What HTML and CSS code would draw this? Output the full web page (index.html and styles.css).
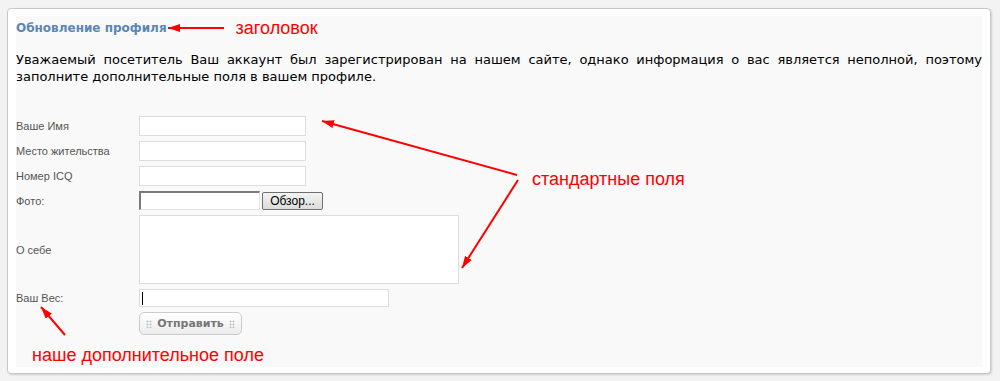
FILE: index.html
```html
<!DOCTYPE html>
<html lang="ru">
<head>
    <meta charset="UTF-8">
    <meta name="viewport" content="width=device-width, initial-scale=1.0">
    <title>Обновление профиля</title>
    <link rel="stylesheet" href="styles.css">
</head>
<body>
    <div id="page">
        <div id="card">
            <div id="panel">
                <div class="title-row">
                    <h2 class="title">Обновление профиля</h2>
                    <span class="note note-title">заголовок</span>
                </div>

                <p class="intro">Уважаемый посетитель Ваш аккаунт был зарегистрирован на нашем сайте, однако информация о вас является неполной, поэтому заполните дополнительные поля в вашем профиле.</p>

                <form id="profileForm">
                    <label for="name">Ваше Имя</label>
                    <input type="text" id="name" class="field">

                    <label for="city">Место жительства</label>
                    <input type="text" id="city" class="field">

                    <label for="icq">Номер ICQ</label>
                    <input type="text" id="icq" class="field">

                    <label for="photo">Фото:</label>
                    <div class="file">
                        <input type="text" id="photo" class="file-path">
                        <button type="button" class="browse">Обзор...</button>
                    </div>

                    <label for="about">О себе</label>
                    <textarea id="about" class="area"></textarea>

                    <label for="weight">Ваш Вес:</label>
                    <input type="text" id="weight" class="field field-wide">

                    <span></span>
                    <div>
                        <button type="submit" class="submit"><i class="grip"></i>Отправить<i class="grip"></i></button>
                    </div>
                </form>

                <p class="note note-extra">наше дополнительное поле</p>
            </div>
        </div>

        <!-- annotations drawn over the screenshot -->
        <span class="note note-std">стандартные поля</span>
        <svg class="arrows" width="1000" height="381" viewBox="0 0 1000 381">
            <defs>
                <marker id="head" markerUnits="userSpaceOnUse" markerWidth="13" markerHeight="8" refX="12" refY="4" orient="auto">
                    <path d="M0,0 L12,4 L0,8 Z" fill="#ff0000"/>
                </marker>
            </defs>
            <g stroke="#ff0000" stroke-width="2" marker-end="url(#head)">
                <line x1="224" y1="28" x2="168" y2="28"/>
                <line x1="517" y1="175" x2="322" y2="121"/>
                <line x1="518" y1="180" x2="462" y2="268"/>
                <line x1="65" y1="335" x2="41" y2="307"/>
            </g>
        </svg>
    </div>
</body>
</html>
```

FILE: styles.css
```css
body {
    margin: 0;
    background-color: #f3f3f3;
    font-family: 'DejaVu Sans', Verdana, sans-serif;
}

#page {
    position: relative;
    width: 1000px;
    height: 381px;
    padding: 8px 0 0 7px;
    box-sizing: border-box;
}

#card {
    width: 984px;
    box-sizing: border-box;
    padding: 7px 8px 6px 8px;
    background-color: #ffffff;
    border: 1px solid #c9c9c9;
    border-radius: 4px;
    box-shadow: 1px 1px 2px rgba(0, 0, 0, 0.15);
}

#panel {
    background-color: #f9f9f9;
    padding: 3px 0 3px 0;
}

.title-row {
    display: flex;
    align-items: center;
    gap: 69px;
    height: 18px;
}

.title {
    margin: 0;
    font-size: 12px;
    line-height: 18px;
    font-weight: bold;
    color: #5b86b4;
}

.intro {
    margin: 14px 0 0 0;
    font-size: 13px;
    line-height: 17px;
    color: #000000;
    text-align: justify;
}

.note {
    font-family: 'Liberation Sans', Arial, sans-serif;
    font-size: 18px;
    line-height: 18px;
    color: #ff0000;
}

.note-extra {
    margin: 11px 0 0 16px;
}

.note-std {
    position: absolute;
    left: 532px;
    top: 170px;
}

.arrows {
    position: absolute;
    left: 0;
    top: 0;
    pointer-events: none;
}

#profileForm {
    display: grid;
    grid-template-columns: 123px auto;
    row-gap: 5px;
    align-items: center;
    margin-top: 31px;
}

#profileForm label {
    font-family: 'Liberation Sans', Tahoma, sans-serif;
    font-size: 11px;
    color: #555555;
}

.field {
    width: 167px;
    height: 20px;
    box-sizing: border-box;
    border: 1px solid #dddddd;
    background-color: #ffffff;
    padding: 0 3px;
}

.field-wide {
    width: 250px;
    height: 18px;
    background: #ffffff linear-gradient(#000000, #000000) no-repeat 2px 2px / 1px 13px;
}

.file {
    display: flex;
    align-items: center;
    gap: 2px;
    height: 19px;
}

.file-path {
    width: 121px;
    height: 19px;
    box-sizing: border-box;
    border: 1px solid #e4e4e4;
    border-top: 2px solid #7a7a7a;
    border-left: 2px solid #7a7a7a;
    background-color: #ffffff;
}

.browse {
    width: 61px;
    height: 18px;
    padding: 0;
    font-family: 'Liberation Sans', Tahoma, sans-serif;
    font-size: 12px;
    color: #000000;
    border: 1px solid #707070;
    border-radius: 2px;
    background: linear-gradient(#f4f4f4, #dcdcdc);
}

.area {
    display: block;
    width: 320px;
    height: 69px;
    box-sizing: border-box;
    border: 1px solid #dddddd;
    background-color: #ffffff;
    resize: none;
}

.submit {
    display: flex;
    align-items: center;
    justify-content: center;
    gap: 5px;
    width: 103px;
    height: 23px;
    padding: 0;
    font-family: 'DejaVu Sans', Verdana, sans-serif;
    font-size: 11px;
    font-weight: bold;
    color: #777777;
    border: 1px solid #cccccc;
    border-radius: 5px;
    background: linear-gradient(#ffffff, #ececec);
}

.grip {
    display: inline-block;
    width: 6px;
    height: 8px;
    background-image: radial-gradient(circle, #c4c4c4 45%, transparent 50%);
    background-size: 3px 3px;
}
```
